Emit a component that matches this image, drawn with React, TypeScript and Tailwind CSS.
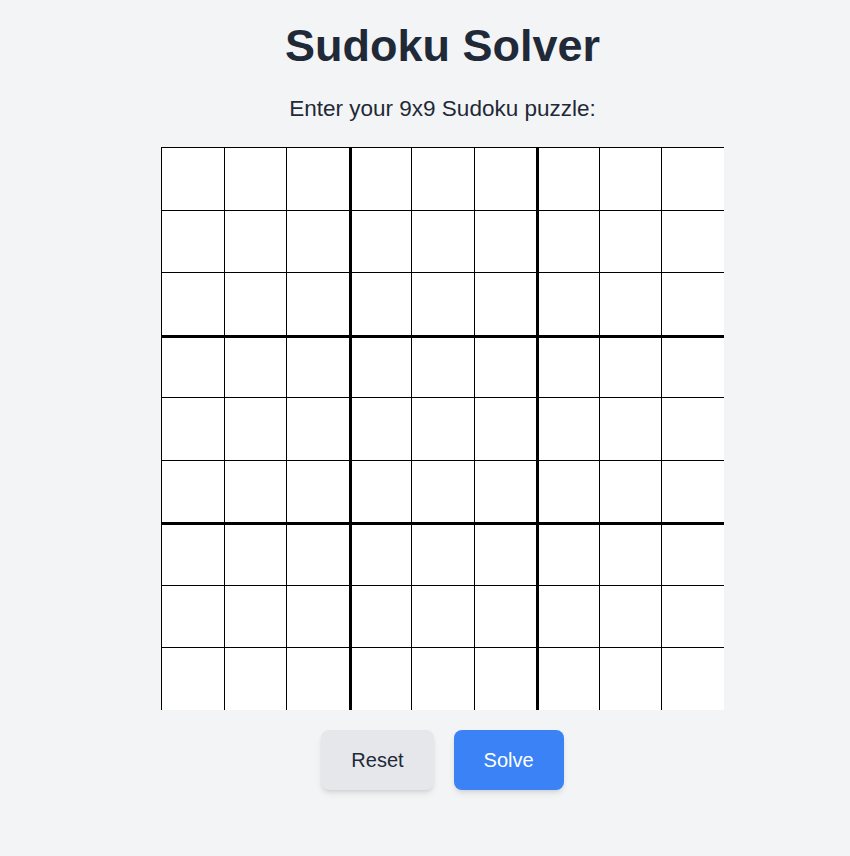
import { useState } from "react";

const emptyBoard = () => Array.from({ length: 9 }, () => Array(9).fill(""));

const App = () => {
  const [board, setBoard] = useState<string[][]>(emptyBoard());

  const handleChange = (r: number, c: number, value: string) => {
    const v = value.replace(/[^1-9]/g, "").slice(-1);
    const next = board.map((row) => row.slice());
    next[r][c] = v;
    setBoard(next);
  };

  return (
    <div
      className="min-h-screen w-full bg-[#f3f4f6] pl-[35px] pt-[19px] text-[#1f2937]"
      style={{ fontFamily: '"Liberation Sans", Arial, sans-serif' }}
    >
      <div className="flex flex-col items-center">
        <h1 className="text-[45px] leading-[54px] font-bold">Sudoku Solver</h1>
        <p className="mt-[20px] text-[22.5px] leading-[32px]">
          Enter your 9x9 Sudoku puzzle:
        </p>
        <div className="mt-[22px] grid w-[562.5px] grid-cols-9">
          {board.map((row, r) =>
            row.map((cell, c) => (
              <input
                key={`${r}-${c}`}
                type="text"
                inputMode="numeric"
                value={cell}
                onChange={(e) => handleChange(r, c, e.target.value)}
                className={`h-[62.5px] w-full min-w-0 border-black bg-white text-center text-2xl outline-none ${
                  c === 3 || c === 6 ? "border-l-[3px]" : "border-l"
                } ${r === 3 || r === 6 ? "border-t-[3px]" : "border-t"}`}
              />
            ))
          )}
        </div>
        <div className="mt-[20.5px] flex flex-row gap-5">
          <button
            onClick={() => setBoard(emptyBoard())}
            className="rounded-lg bg-[#e5e7eb] px-[30px] py-4 text-xl leading-7 text-[#1f2937] shadow-md"
          >
            Reset
          </button>
          <button className="rounded-lg bg-[#3b82f6] px-[30px] py-4 text-xl leading-7 text-white shadow-md">
            Solve
          </button>
        </div>
      </div>
    </div>
  );
};

export default App;
